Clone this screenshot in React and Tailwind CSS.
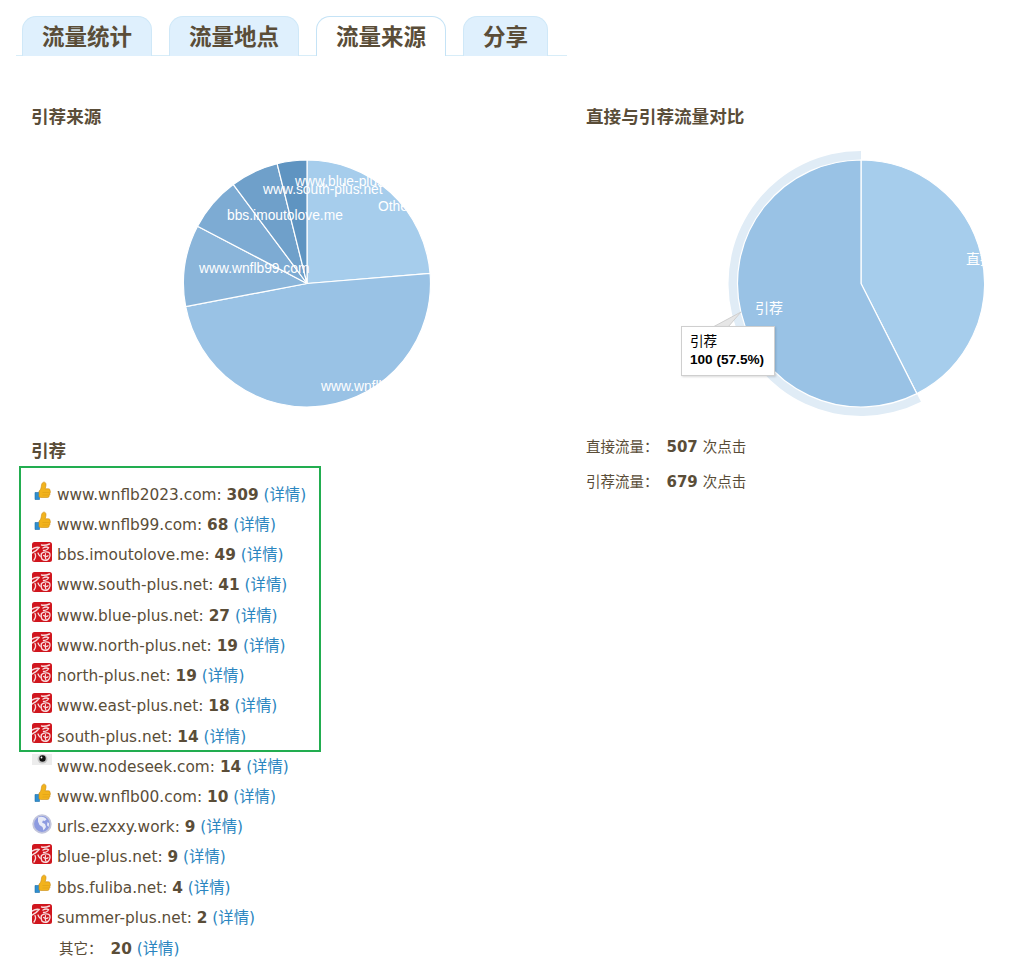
import React from "react";

function polar(cx, cy, r, deg) {
  const a = ((deg - 90) * Math.PI) / 180;
  return [cx + r * Math.cos(a), cy + r * Math.sin(a)];
}

function slicePath(cx, cy, r, from, to) {
  const [x1, y1] = polar(cx, cy, r, from);
  const [x2, y2] = polar(cx, cy, r, to);
  const large = to - from > 180 ? 1 : 0;
  return `M${cx} ${cy}L${x1} ${y1}A${r} ${r} 0 ${large} 1 ${x2} ${y2}Z`;
}

const REFERRER_SLICES = [
  { from: 0, to: 85.3, color: "#a6cdec" },
  { from: 85.3, to: 259.2, color: "#99c2e5" },
  { from: 259.2, to: 297.6, color: "#8ab5da" },
  { from: 297.6, to: 323.3, color: "#7dabd3" },
  { from: 323.3, to: 346, color: "#6fa0ca" },
  { from: 346, to: 360, color: "#5f94c1" },
];

const REFERRER_LABELS = [
  { text: "www.blue-plus.net", x: 295, y: 186, clip: 380 },
  { text: "www.south-plus.net", x: 263, y: 194, clip: 400 },
  { text: "Other", x: 378, y: 211, clip: 406 },
  { text: "bbs.imoutolove.me", x: 227, y: 220, clip: 400 },
  { text: "www.wnflb99.com", x: 199, y: 273, clip: 400 },
  { text: "www.wnflb2023.com", x: 321, y: 391, clip: 383 },
];

function ReferrerPie() {
  return (
    <svg width="270" height="265" viewBox="170 150 270 265" className="block">
      <defs>
        {REFERRER_LABELS.map((l, i) => (
          <clipPath key={i} id={`ref-label-${i}`}>
            <rect x="170" y="150" width={l.clip - 170} height="265" />
          </clipPath>
        ))}
      </defs>
      {REFERRER_SLICES.map((s, i) => (
        <path
          key={i}
          d={slicePath(307, 283.5, 123.5, s.from, s.to)}
          fill={s.color}
          stroke="#fff"
          strokeWidth="1.2"
        />
      ))}
      {REFERRER_LABELS.map((l, i) => (
        <text
          key={i}
          x={l.x}
          y={l.y}
          fill="#fff"
          fontSize="13.8"
          fontFamily='"Liberation Sans", sans-serif'
          clipPath={`url(#ref-label-${i})`}
        >
          {l.text}
        </text>
      ))}
    </svg>
  );
}

function TrafficPie() {
  return (
    <svg width="330" height="285" viewBox="670 140 330 285" className="block">
      <defs>
        <clipPath id="direct-label">
          <rect x="670" y="140" width="314" height="285" />
        </clipPath>
      </defs>
      <path d={slicePath(861, 283.5, 132.5, 153.1, 360)} fill="#e0ecf6" />
      <path d={slicePath(861, 283.5, 123.5, 0, 153.1)} fill="#a6cdec" stroke="#fff" strokeWidth="1.2" />
      <path d={slicePath(861, 283.5, 123.5, 153.1, 360)} fill="#99c2e5" stroke="#fff" strokeWidth="1.2" />
      <text
        x="966"
        y="264"
        fill="#fff"
        fontSize="14"
        fontFamily='"Noto Sans CJK SC", sans-serif'
        clipPath="url(#direct-label)"
      >
        直接
      </text>
      <text x="755" y="313" fill="#fff" fontSize="14" fontFamily='"Noto Sans CJK SC", sans-serif'>
        引荐
      </text>
      <path d="M713 327L741 312L728 327" fill="#e6e6e6" stroke="#cfcfcf" strokeWidth="1" />
    </svg>
  );
}

function Tooltip() {
  return (
    <div className="absolute left-[681px] top-[326px] w-[94px] h-[50px] bg-white border border-[#cfcfcf] shadow-[1px_1px_2px_rgba(0,0,0,0.15)] pl-[8px] pt-[6px] text-[13.6px] leading-[18px] text-black whitespace-nowrap [font-family:'Liberation_Sans','Noto_Sans_CJK_SC',sans-serif]">
      <div>引荐</div>
      <div className="font-bold">100 (57.5%)</div>
    </div>
  );
}

function ThumbIcon() {
  return (
    <svg width="20" height="20" viewBox="0 0 20 20" className="block">
      <path d="M3 11.500h4.500v7H3z" fill="#2f8fd0" stroke="#1c6ea6" strokeWidth="0.6" />
      <path
        d="M7 10c1.500-.8 2-2.500 2.300-4.500.2-1.800.5-3.800 2.200-4.300 1.600-.4 2.700.9 2.500 2.800-.1 1.300-.4 2.600-.9 3.800h3.400c1.200 0 1.800 1 1.600 2 .5.800.4 1.800-.2 2.400.3.900 0 1.800-.7 2.200.1 1.200-.6 2.100-1.800 2.100H9c-.8 0-1.500-.3-2-.7z"
        fill="#f2b31c"
        stroke="#c98a10"
        strokeWidth="0.6"
      />
      <path d="M10.500 11.500h7M10.500 14h6.500" stroke="#d99a14" strokeWidth="0.5" />
    </svg>
  );
}

// blotchy seal stamp, the white marks are only a rough impression of it
function SealIcon() {
  return (
    <svg width="20" height="20" viewBox="0 0 20 20" className="block">
      <rect width="20" height="20" rx="2.500" fill="#d0161e" />
      <g fill="none" stroke="#fff" strokeLinecap="round" opacity="0.85">
        <path d="M0 7c2.500-1.500 5-2 7-1.500-1.800 2.500-4.500 4.500-7 5.500" strokeWidth="1.500" />
        <path d="M3 11.500c1 2 .5 4.500-1 6.500M6 11c.5 1.500 1.200 2.500 2.200 3.200" strokeWidth="1.300" />
        <path d="M9.500 3c2.500.5 5 .2 8-1M11 6c1.500-1 4-1.200 5.500-.4-.5 1.500-2.500 2.700-5 2.900" strokeWidth="1.400" />
        <path d="M9.500 11.500c2-1.800 6-2.300 8-.5 1 2 .2 5-1.500 6.500-2 1-4.500.8-6-.4-1-1.800-1-3.800-.5-5.600z" strokeWidth="1.400" />
        <path d="M11.500 13.500c1.500 1 3 1.500 4.500.2M13.500 11.500c-.4 2-.4 4 .3 5.500" strokeWidth="1.200" />
      </g>
    </svg>
  );
}

function EyeIcon() {
  return (
    <svg width="20" height="20" viewBox="0 0 20 20" className="block">
      <rect y="1" width="20" height="11" fill="#ececec" />
      <ellipse cx="10.500" cy="6" rx="5" ry="4.500" fill="#c4c4c4" />
      <circle cx="10.500" cy="5.500" r="3.200" fill="#111" />
      <circle cx="9.500" cy="4.500" r="0.900" fill="#fff" />
    </svg>
  );
}

function GlobeIcon() {
  return (
    <svg width="20" height="20" viewBox="0 0 20 20" className="block">
      <circle cx="10" cy="10" r="8.800" fill="#8d9be0" stroke="#c3c6dc" strokeWidth="1.800" />
      <path d="M6 3.500c3.500-1.500 7-.5 8.500 2l-2 1.500-1.500-.5-1 2 3 1.500 1 3-2.500 3.500-1-3.500-3-2-1.500-3.500z" fill="#e8ebf8" />
      <path d="M15.500 8l1.700 1.500-.6 3.500-1.600-1.800z" fill="#e8ebf8" />
    </svg>
  );
}

const ICONS = { thumb: ThumbIcon, seal: SealIcon, eye: EyeIcon, globe: GlobeIcon };

const HIGHLIGHTED = [
  { host: "www.wnflb2023.com", hits: 309, icon: "thumb" },
  { host: "www.wnflb99.com", hits: 68, icon: "thumb" },
  { host: "bbs.imoutolove.me", hits: 49, icon: "seal" },
  { host: "www.south-plus.net", hits: 41, icon: "seal" },
  { host: "www.blue-plus.net", hits: 27, icon: "seal" },
  { host: "www.north-plus.net", hits: 19, icon: "seal" },
  { host: "north-plus.net", hits: 19, icon: "seal" },
  { host: "www.east-plus.net", hits: 18, icon: "seal" },
  { host: "south-plus.net", hits: 14, icon: "seal" },
];

const REST = [
  { host: "www.nodeseek.com", hits: 14, icon: "eye" },
  { host: "www.wnflb00.com", hits: 10, icon: "thumb" },
  { host: "urls.ezxxy.work", hits: 9, icon: "globe" },
  { host: "blue-plus.net", hits: 9, icon: "seal" },
  { host: "bbs.fuliba.net", hits: 4, icon: "thumb" },
  { host: "summer-plus.net", hits: 2, icon: "seal" },
];

function Row({ host, hits, icon }) {
  const Icon = ICONS[icon];
  return (
    <li className="h-[30.25px] flex">
      <div className="w-5 h-5 mt-[2px] shrink-0">
        <Icon />
      </div>
      <div className="ml-[5px] mt-[5.6px] leading-[20px] text-[15.35px] whitespace-nowrap">
        {host}: <b className="font-bold">{hits}</b>{" "}
        <a className="text-[#2a85c0]">(详情)</a>
      </div>
    </li>
  );
}

const TABS = [
  { label: "流量统计", active: false },
  { label: "流量地点", active: false },
  { label: "流量来源", active: true },
  { label: "分享", active: false },
];

export default function App() {
  return (
    <div className="relative w-[1017px] h-[967px] bg-white text-[#5a4d38] overflow-hidden [font-family:'DejaVu_Sans','Noto_Sans_CJK_SC',sans-serif]">
      <div className="ml-[16px] mr-[450px] pt-[16px] pl-[6px] h-[56px] flex items-end gap-[17px] border-b border-[#d8edf8]">
        {TABS.map((t) => (
          <div
            key={t.label}
            className={
              "h-[40px] -mb-px px-[19px] rounded-t-[14px] border border-b-0 text-[22.5px] leading-[40px] font-bold " +
              (t.active
                ? "bg-white border-[#c5e3f6]"
                : "bg-[#dff0fd] border-[#cfe8f8]")
            }
          >
            {t.label}
          </div>
        ))}
      </div>

      <div className="flex">
        <div className="w-[586px] shrink-0">
          <h2 className="ml-[31px] mt-[49px] text-[17.6px] leading-[24px] font-bold">引荐来源</h2>
          <div className="ml-[170px] mt-[21px]">
            <ReferrerPie />
          </div>
          <h2 className="ml-[31px] mt-[24px] text-[17.6px] leading-[24px] font-bold">引荐</h2>
          <div className="ml-[19px] mt-[3px] w-[302px] h-[286px] border-2 border-[#22ad50] pl-[11px] pt-[11px]">
            <ul>
              {HIGHLIGHTED.map((r) => (
                <Row key={r.host} {...r} />
              ))}
            </ul>
          </div>
          <ul className="ml-[32px] -mt-[1px]">
            {REST.map((r) => (
              <Row key={r.host} {...r} />
            ))}
            <li className="pl-[27px] pt-[6px] text-[15.35px] leading-[20px] whitespace-nowrap">
              <span className="text-[14.5px]">其它：</span>
              <b className="ml-[8px] font-bold">20</b> <a className="text-[#2a85c0]">(详情)</a>
            </li>
          </ul>
        </div>

        <div className="flex-1">
          <h2 className="mt-[49px] text-[17.6px] leading-[24px] font-bold">直接与引荐流量对比</h2>
          <div className="ml-[84px] mt-[11px]">
            <TrafficPie />
          </div>
          <div className="mt-[12px] text-[14.5px] leading-[20px]">
            直接流量：<b className="ml-[8px] mr-[5px] font-bold text-[15px]">507</b>次点击
          </div>
          <div className="mt-[15px] text-[14.5px] leading-[20px]">
            引荐流量：<b className="ml-[8px] mr-[5px] font-bold text-[15px]">679</b>次点击
          </div>
        </div>
      </div>

      <Tooltip />
    </div>
  );
}
